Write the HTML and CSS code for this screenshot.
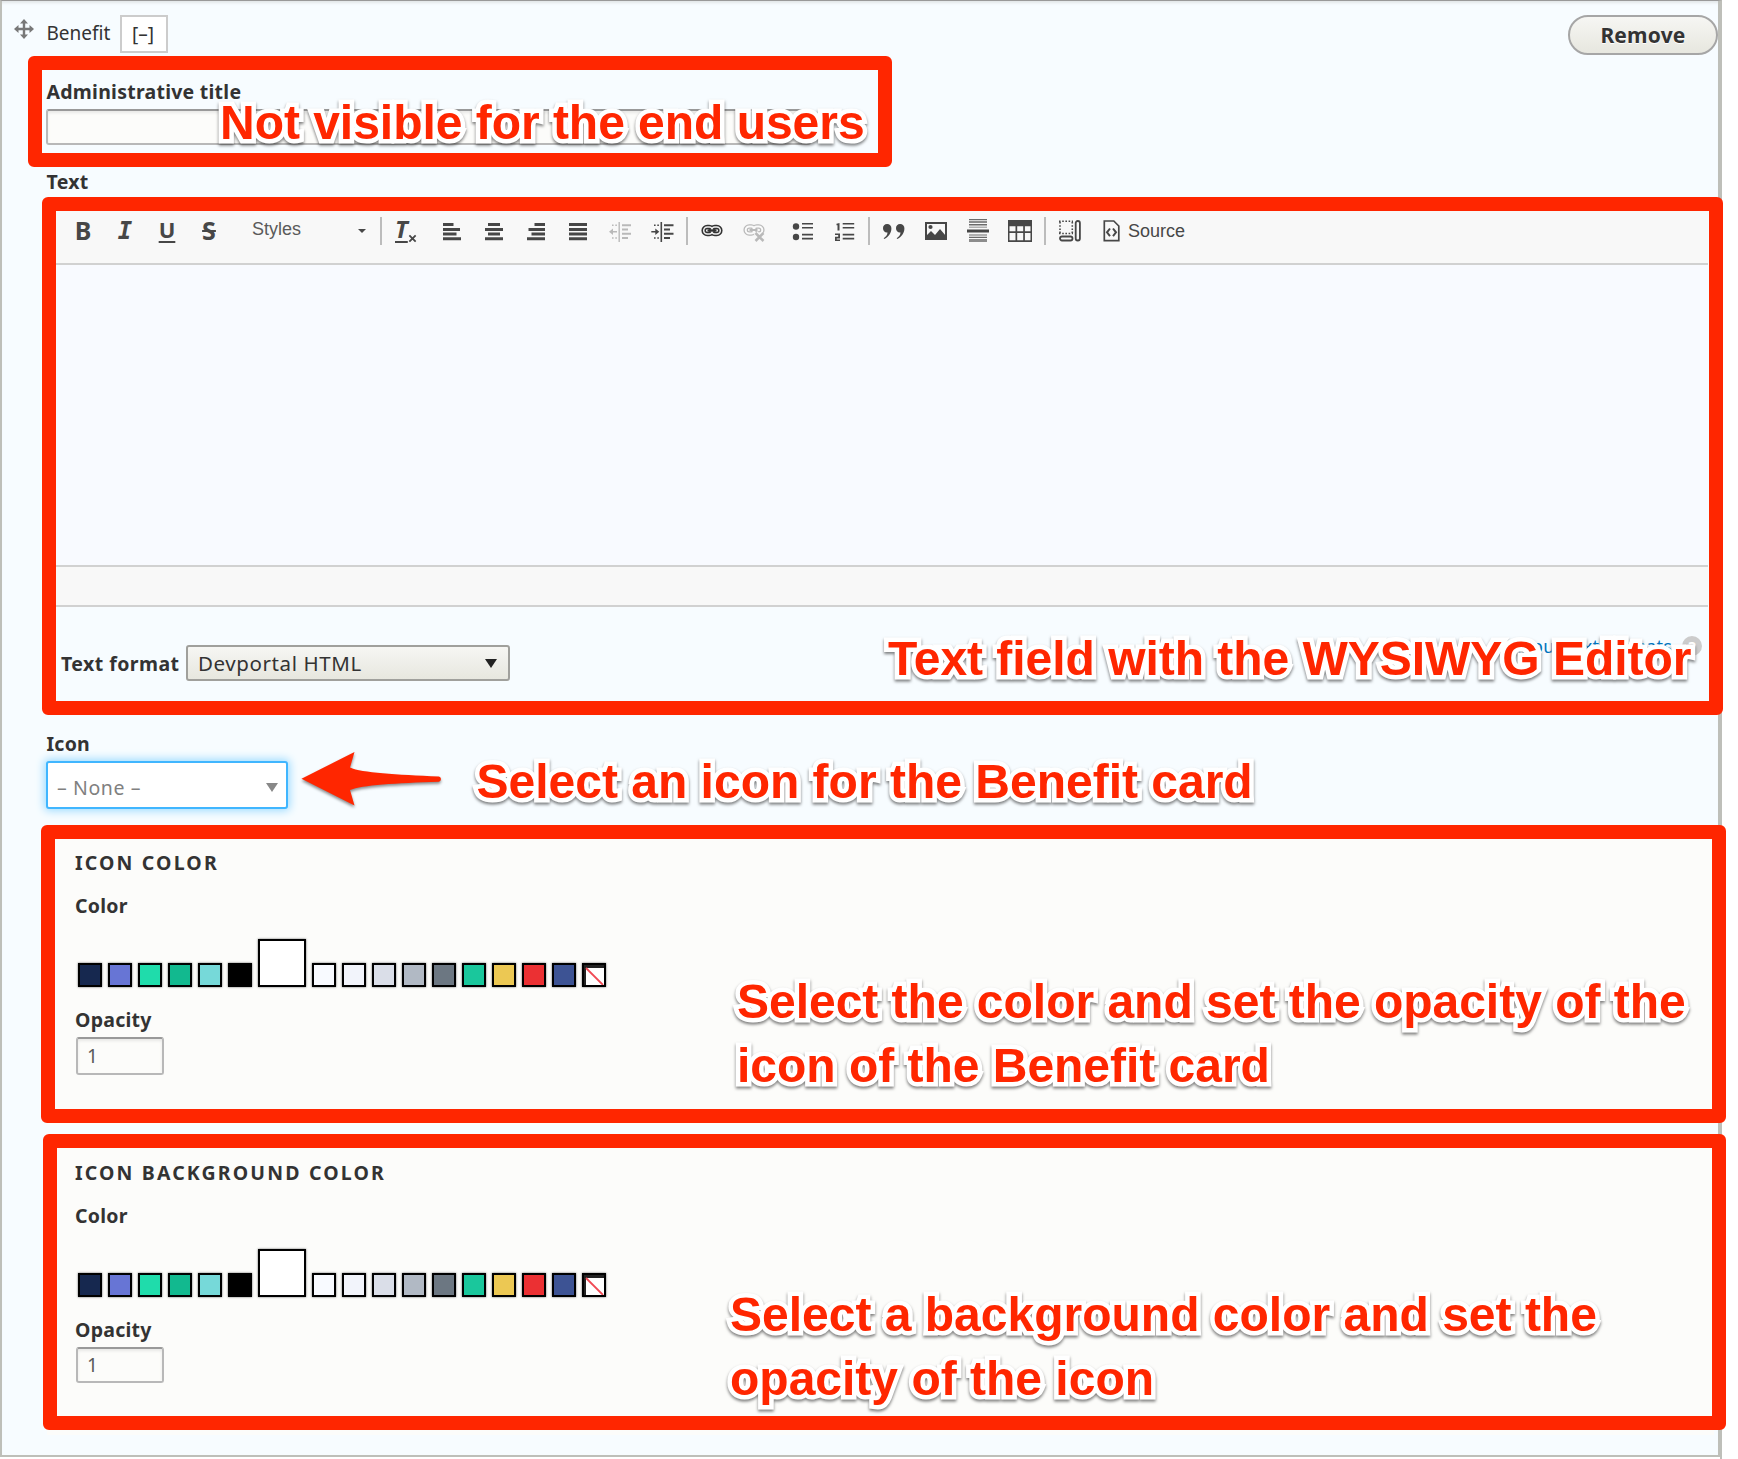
FILE: index.html
```html
<!DOCTYPE html>
<html lang="en">
<head>
<meta charset="utf-8">
<title>Benefit</title>
<link rel="stylesheet" href="styles.css">
</head>
<body>
<main class="page">
  <section class="panel">
    <header class="head">
      <svg class="drag" viewBox="0 0 20 20"><path d="M10 0l4 4.500h-2.800v4.300h4.300V6L20 10l-4.500 4v-2.800h-4.300v4.300H14L10 20l-4-4.500h2.800v-4.300H4.500V14L0 10l4.500-4v2.800h4.300V4.500H6z" fill="#787878"/></svg>
      <span class="kind">Benefit</span>
      <button class="toggle">[–]</button>
      <button class="remove">Remove</button>
    </header>

    <div class="field admin">
      <label class="label">Administrative title</label>
      <input class="input admin-input" type="text">
    </div>

    <div class="field text">
      <label class="label">Text</label>
      <div class="editor">
        <div class="toolbar">
          <span class="tool glyph b">B</span>
          <span class="tool glyph i">I</span>
          <span class="tool glyph u">U</span>
          <span class="tool glyph s">S</span>
          <span class="combo">Styles<i class="caret"></i></span>
          <i class="sep"></i>
          <span class="tool m3"><span class="clear"><span class="clear-t">T</span></span><svg class="clear-x" viewBox="0 0 10 10"><path d="M1.500 1.500l7 7M8.500 1.500l-7 7" stroke="#474747" stroke-width="2"/></svg></span>
          <span class="tool m4"><svg viewBox="0 0 24 24"><path d="M3 5h10.500v3H3zM3 10h17v3H3zM3 14.600h13.500v3H3zM3 19.200h18v3H3z"/></svg></span>
          <span class="tool"><svg viewBox="0 0 24 24"><path d="M6 5h12v3H6zM3 10h18v3H3zM6 14.600h12v3H6zM3 19.200h18v3H3z"/></svg></span>
          <span class="tool"><svg viewBox="0 0 24 24"><path d="M10.500 5H21v3H10.500zM4.500 10H21v3H4.500zM7.500 14.600H21v3H7.500zM3 19.200h18v3H3z"/></svg></span>
          <span class="tool"><svg viewBox="0 0 24 24"><path d="M3 5h18v3H3zM3 10h18v3H3zM3 14.600h18v3H3zM3 19.200h18v3H3z"/></svg></span>
          <span class="tool off"><svg viewBox="0 0 24 24"><path d="M10.500 4h1.400v20h-1.400zM14 6.300h9v2h-9zM14 10.500h6v2h-6zM14 14.700h9v2h-9zM14 19h6v2h-6zM4 6.500h1.600v1.500H4zM7.300 6.500h1.600v1.500H7.300zM4 19.300h1.600v1.500H4zM7.300 19.300h1.600v1.500H7.300zM1 13.700l4-3.200v2.400h4v1.600H5v2.400z"/></svg></span>
          <span class="tool"><svg viewBox="0 0 24 24"><path d="M10.500 4h1.600v20h-1.600zM14 6.300h9.500v2H14zM14 10.500h6v2h-6zM14 14.700h9.500v2H14zM14 19h6v2h-6zM4 6.500h1.600v1.500H4zM7.300 6.500h1.600v1.500H7.300zM4 19.300h1.600v1.500H4zM7.300 19.300h1.600v1.500H7.300zM9.300 13.700l-4-3.200v2.400h-4v1.600h4v2.400z"/></svg></span>
          <i class="sep m3"></i>
          <span class="tool m3"><svg viewBox="0 0 24 24" class="line"><g stroke="#333" stroke-width="4.600"><rect x="3.700" y="9" width="9" height="7" rx="3.500"/><rect x="11.300" y="9" width="9" height="7" rx="3.500"/></g><g stroke="#eee" stroke-width="1.500"><rect x="3.700" y="9" width="9" height="7" rx="3.500"/><rect x="11.300" y="9" width="9" height="7" rx="3.500"/></g><path d="M7.500 12.500h9" stroke="#333" stroke-width="2.400"/></svg></span>
          <span class="tool off"><svg viewBox="0 0 24 24" class="line"><g stroke="#474747" stroke-width="4.600"><rect x="3.700" y="8.500" width="9" height="7" rx="3.500"/><rect x="11.300" y="8.500" width="9" height="7" rx="3.500"/></g><g stroke="#fff" stroke-width="2"><rect x="3.700" y="8.500" width="9" height="7" rx="3.500"/><rect x="11.300" y="8.500" width="9" height="7" rx="3.500"/></g><path d="M7.500 12h8" stroke="#474747" stroke-width="2"/><path d="M13.500 15l8 8M21.500 15l-8 8" stroke="#f8f8f8" stroke-width="5"/><path d="M13.500 15l8 8M21.500 15l-8 8" stroke="#474747" stroke-width="2.500"/></svg></span>
          <span class="tool m7"><svg viewBox="0 0 24 24"><circle cx="5" cy="8.500" r="3.200"/><circle cx="5" cy="19" r="3.200"/><path d="M11 5h11v1.600H11zM11 9h11v1.600H11zM11 15.800h11v1.600H11zM11 19.800h11v1.600H11z"/></svg></span>
          <span class="tool"><svg viewBox="0 0 24 24"><path d="M9.700 5h11.500v1.600H9.700zM9.700 9h11.500v1.600H9.700zM9.700 15.800h11.500v1.600H9.700zM9.700 19.800h11.500v1.600H9.700zM4.500 5.500L6.500 5v7.500H4.500V7.200H3.500V5.800zM2 15.500h5v5H3.700v1H7V23H2v-4.200h3.200V17H2z"/></svg></span>
          <i class="sep m2"></i>
          <span class="tool m3"><svg viewBox="0 0 24 24"><path id="q" d="M5 6a4.200 4.200 0 0 1 4.400 4.500c0 4.500-3 8.500-7.200 10.500l-.5-.8c2.200-1.500 3.800-3.500 3.800-5.800C3 14.800 1 12.800 1 10.200A4 4 0 0 1 5 6z"/><use href="#q" x="13"/></svg></span>
          <span class="tool"><svg viewBox="0 0 24 24"><path fill-rule="evenodd" d="M1 4h22v18H1zm2 2v14h18V6z"/><circle cx="6.500" cy="9" r="2.100"/><path d="M2.500 20.500v-3L7 13l4 4 5-6 5.500 6.500v3z"/></svg></span>
          <span class="tool"><svg viewBox="0 0 24 24"><path d="M1 11.500h22v3H1z"/><path d="M3 .9h18v1.400H3zM3 3.300h18v1.400H3zM3 6h18v1.400H3zM3 8.700h18v.8H3zM3 16.500h18v1H3zM3 18.800h18v1.300H3zM3 21.300h18v1.400H3zM3 23.200h18v.8H3z" opacity=".8"/></svg></span>
          <span class="tool"><svg viewBox="0 0 24 24"><path fill-rule="evenodd" d="M0 2h24v22H0zm1.500 6.300v5h6v-5zm7.700 0v5h6v-5zm7.700 0v5h5.600v-5zM1.500 15v7.300h6V15zm7.700 0v7.300h6V15zm7.700 0v7.300h5.600V15z"/></svg></span>
          <i class="sep m3"></i>
          <span class="tool m3"><svg viewBox="0 0 24 24" class="line"><path d="M1 3.200h14M1 15.500h14" stroke="#474747" stroke-width="1.600" stroke-dasharray="1.600 1.600"/><path d="M2 4v11M14.300 4v11" stroke="#474747" stroke-width="1.600" stroke-dasharray="1.600 1.600"/><rect x="17.700" y="3" width="4.200" height="19.500" rx="2" stroke="#474747" stroke-width="1.800"/><rect x="2" y="18.500" width="12.500" height="4" rx="2" stroke="#474747" stroke-width="1.800"/></svg></span>
          <span class="tool"><svg viewBox="0 0 24 24" class="line"><path d="M4.300 3h9.500l5 5v14.700H4.300z" stroke="#474747" stroke-width="1.700"/><path d="M10 10.500L7 14.300l3 3.800M13 10.500l3 3.800-3 3.800" stroke="#474747" stroke-width="2"/></svg></span>
          <span class="source">Source</span>
        </div>
        <div class="canvas"></div>
        <div class="status"></div>
      </div>
      <div class="format">
        <label class="label">Text format</label>
        <span class="select">Devportal HTML<svg class="tri" viewBox="0 0 12 9"><path d="M0 0h12L6 9z" fill="#222"/></svg></span>
        <span class="about">About text formats</span><span class="help">?</span>
      </div>
    </div>

    <div class="field icon">
      <label class="label">Icon</label>
      <span class="picker">– None –<svg class="tri" viewBox="0 0 12 9"><path d="M0 0h12L6 9z" fill="#888"/></svg></span>
    </div>

    <fieldset class="group">
      <h3 class="title">ICON COLOR</h3>
      <label class="label">Color</label>
      <div class="swatches">
        <i class="sw c1"></i><i class="sw c2"></i><i class="sw c3"></i><i class="sw c4"></i><i class="sw c5"></i><i class="sw c6"></i><i class="sw big"></i><i class="sw c7"></i><i class="sw c8"></i><i class="sw c9"></i><i class="sw c10"></i><i class="sw c11"></i><i class="sw c12"></i><i class="sw c13"></i><i class="sw c14"></i><i class="sw c15"></i><i class="sw none"><svg viewBox="0 0 20 20"><path d="M0 0h20v3H2v17H0z" fill="#222"/><path d="M2 3l17 17" stroke="#f04a55" stroke-width="1.800"/></svg></i>
      </div>
      <label class="label">Opacity</label>
      <input class="input opacity" value="1">
    </fieldset>

    <fieldset class="group second">
      <h3 class="title">ICON BACKGROUND COLOR</h3>
      <label class="label">Color</label>
      <div class="swatches">
        <i class="sw c1"></i><i class="sw c2"></i><i class="sw c3"></i><i class="sw c4"></i><i class="sw c5"></i><i class="sw c6"></i><i class="sw big"></i><i class="sw c7"></i><i class="sw c8"></i><i class="sw c9"></i><i class="sw c10"></i><i class="sw c11"></i><i class="sw c12"></i><i class="sw c13"></i><i class="sw c14"></i><i class="sw c15"></i><i class="sw none"><svg viewBox="0 0 20 20"><path d="M0 0h20v3H2v17H0z" fill="#222"/><path d="M2 3l17 17" stroke="#f04a55" stroke-width="1.800"/></svg></i>
      </div>
      <label class="label">Opacity</label>
      <input class="input opacity short" value="1">
    </fieldset>
  </section>

  <div class="mark mark-title"></div>
  <div class="mark mark-text"></div>
  <div class="mark mark-color"></div>
  <div class="mark mark-bg"></div>
  <p class="note note-title">Not visible for the end users</p>
  <p class="note note-text">Text field with the WYSIWYG Editor</p>
  <p class="note note-icon">Select an icon for the Benefit card</p>
  <p class="note note-color">Select the color and set the opacity of the<br>icon of the Benefit card</p>
  <p class="note note-bg">Select a background color and set the<br>opacity of the icon</p>
  <svg class="pointer" viewBox="0 0 150 64"><path d="M5.500 32.700L58.500 6 54 21.500C66 27 100 28.500 143 30.500a2.700 2.700 0 0 1 0 5.200C100 37 66 39 54 44L58.500 59.500z" fill="#ff2600"/></svg>
</main>
</body>
</html>
```
FILE: styles.css
```css
* { box-sizing: border-box; }
body { margin: 0; background: #fff; }
.page {
  position: relative;
  width: 1738px;
  height: 1459px;
  overflow: hidden;
  font-family: "Noto Sans", sans-serif;
  color: #333;
  background: linear-gradient(#bfbfba, #bfbfba) 1720px 0 / 2px 100% no-repeat;
}
.panel {
  width: 1722px;
  height: 1457px;
  padding: 14px 0 0 45px;
  background: #f7fcff;
  border: 2px solid #bebfb9;
  border-top: 1px solid #999;
  border-right-width: 4px;
  box-shadow: inset 0 4px 3px -2px #e2e6e8;
}
.label { display: block; font-size: 19.500px; font-weight: 700; line-height: 26px; letter-spacing: .25px; }

.head { display: flex; height: 40px; margin-left: -33px; align-items: flex-start; }
.drag { width: 20px; height: 20px; margin-top: 4px; }
.kind { width: 73px; margin-left: 12.500px; font-size: 19px; line-height: 36px; }
.toggle {
  width: 48px; height: 38px; margin-left: .5px; padding: 0 2px 0 0;
  border: 2px solid #ccc; background: #fff;
  font: 19px/34px "Noto Sans", sans-serif; color: #333;
}
.remove {
  width: 150px; height: 40px; margin-left: auto; padding: 0;
  border: 2px solid #a6a6a6; border-radius: 20px;
  background: linear-gradient(#f6f6f3, #e7e7df);
  font: 700 21px/34px "Noto Sans", sans-serif; color: #333;
  letter-spacing: .2px;
  text-shadow: 0 1px #fff;
}
.input {
  display: block;
  border: 2px solid #b8b8b8; border-top-color: #999; border-radius: 3px;
  background: #fcfcfa; box-shadow: inset 0 2px 3px #e8e8e6;
  font: 19px "Noto Sans", sans-serif; color: #595959;
}
.admin { height: 98px; padding-top: 24px; }
.admin .label, .text > .label, .icon .label { margin-left: -.5px; }
.admin-input { width: 765px; height: 36px; margin: 4px 0 0 -1px; }

.text > .label { line-height: 58px; height: 58px; }
.editor { width: 1661px; margin-right: 9px; }
.toolbar {
  display: flex; align-items: flex-start;
  height: 54px; padding: 6px 0 0 15px;
  background: #f8f8f8; border-bottom: 2px solid #d1d1d1;
}
.tool { position: relative; flex: none; display: flex; justify-content: center; width: 42px; height: 28px; color: #474747; }
.tool svg { width: 24px; height: 24px; margin-top: 1px; fill: #474747; }
.tool .line { fill: none; }
.off { opacity: .35; }
.glyph { font: 700 25px/27px "Noto Sans", sans-serif; }
.i { font: italic 700 24px/28px "DejaVu Sans Mono", monospace; }
.u { font-size: 22px; line-height: 25px; text-decoration: underline; text-decoration-thickness: 2px; text-underline-offset: 3px; }
.s { text-decoration: line-through; text-decoration-thickness: 2px; }
.combo {
  display: flex; justify-content: space-between; width: 150px; padding: 0 14px 0 22px;
  font: 18px/25px "Liberation Sans", sans-serif; color: #5a5a5a;
}
.caret { width: 0; height: 0; margin-top: 12px; border: 4px solid transparent; border-top-color: #474747; border-bottom: 0; }
.sep { flex: none; width: 2px; height: 28px; background: #bcbcbc; }
.m2 { margin-left: 2px; } .m3 { margin-left: 3px; } .m4 { margin-left: 4px; } .m7 { margin-left: 7px; }
.clear { width: 22px; font: italic 700 24px/24px "Noto Sans", sans-serif; }
.clear-t { text-decoration: underline; text-decoration-thickness: 1.500px; text-underline-offset: 3px; }
.tool .clear-x { position: absolute; left: 23px; top: 16px; width: 9px; height: 9px; }
.source { margin-left: -5px; font: 18px/29px "Liberation Sans", sans-serif; color: #474747; }
.canvas { height: 300px; background: #f8faff; }
.status { height: 42px; background: #f8f8f8; border: solid #d1d1d1; border-width: 2px 0; }
.format { display: flex; align-items: flex-start; height: 124px; padding: 38px 0 0 14px; }
.format .label { width: 125px; line-height: 37px; letter-spacing: .45px; }
.select {
  display: flex; justify-content: space-between; width: 324px; height: 36px; padding: 0 11px 0 10px;
  border: 2px solid #a0a09c; border-radius: 3px; background: linear-gradient(#f6f6f3, #e7e7df);
  font-size: 20.500px; line-height: 33px; letter-spacing: .6px;
}
.tri { width: 12px; height: 9px; margin-top: 12px; }
.about { margin-left: auto; font-size: 18px; line-height: 3px; letter-spacing: .2px; color: #0074bd; }
.help {
  width: 20px; height: 20px; margin: -9px 16px 0 10px; border-radius: 50%;
  background: #ccc; color: #fff; font: 700 15px/20px "Noto Sans", sans-serif; text-align: center;
}
.icon { height: 96px; }
.icon .label { height: 30px; }
.picker {
  display: flex; justify-content: space-between; width: 242px; height: 48px; margin-left: -1px; padding: 0 8px 0 9px;
  border: 2px solid #40b6ff; border-radius: 3px; background: #fff; box-shadow: 0 0 9px 2px #9fdcff;
  font-size: 19.500px; line-height: 50px; letter-spacing: .6px; color: #808080;
}
.picker .tri { margin-top: 20px; }

.group {
  width: 1667px; height: 298px; margin: 0; padding: 22px 0 0 28px;
  border: 0; background: #fcfcfa;
}
.second { margin-top: 12px; }
.title { margin: 0 0 17px; font-size: 19.500px; line-height: 27px; letter-spacing: 2.150px; white-space: nowrap; }
.swatches { display: flex; align-items: flex-end; gap: 6px; height: 68px; padding-left: 3px; }
.sw { width: 24px; height: 24px; border: 2px solid #000; box-shadow: 0 0 2px rgba(0,0,0,.6); }
.big { width: 48px; height: 48px; background: #fff; }
.c1 { background: #16284f; } .c2 { background: #6775d5; } .c3 { background: #1fdcab; }
.c4 { background: #12b98f; } .c5 { background: #76d9d9; } .c6 { background: #000; }
.c7 { background: #f8faff; } .c8 { background: #f2f4fb; } .c9 { background: #dadee8; }
.c10 { background: #b1b9c4; } .c11 { background: #6c7782; } .c12 { background: #1ac79c; }
.c13 { background: #ecc853; } .c14 { background: #eb3033; } .c15 { background: #3d5394; }
.none { background: #fff; }
.none svg { display: block; width: 20px; height: 20px; }
.swatches + .label { margin-top: 20px; }
.opacity { width: 88px; height: 38px; margin: 4px 0 0 1px; padding: 0 9px; }
.short { height: 36px; }

.mark { position: absolute; border: 14px solid #ff2600; border-radius: 6px; }
.mark-title { left: 28px; top: 56px; width: 864px; height: 111px; }
.mark-text { left: 42px; top: 197px; width: 1680.500px; height: 518px; }
.mark-color { left: 41px; top: 825px; width: 1685px; height: 297.500px; }
.mark-bg { left: 42.500px; top: 1134px; width: 1683.500px; height: 296px; }
.note {
  position: absolute; margin: 0; white-space: nowrap;
  font: 700 48px/64px "Liberation Sans", sans-serif; color: #ff2600;
  -webkit-text-stroke: 9px #fff; paint-order: stroke fill; stroke-linejoin: round;
  filter: drop-shadow(0 2px 1.500px rgba(0,0,0,.5));
}
.note-title { left: 220px; top: 91px; letter-spacing: -.03px; }
.note-text { left: 888px; top: 627px; letter-spacing: -.03px; }
.note-icon { left: 476.500px; top: 750px; }
.note-color { left: 737px; top: 970px; letter-spacing: -.02px; }
.note-bg { left: 730px; top: 1283px; }
.pointer {
  position: absolute; left: 295.500px; top: 746px; width: 150px; height: 64px;
  filter: drop-shadow(0 2px 1.500px rgba(0,0,0,.45));
}
```
